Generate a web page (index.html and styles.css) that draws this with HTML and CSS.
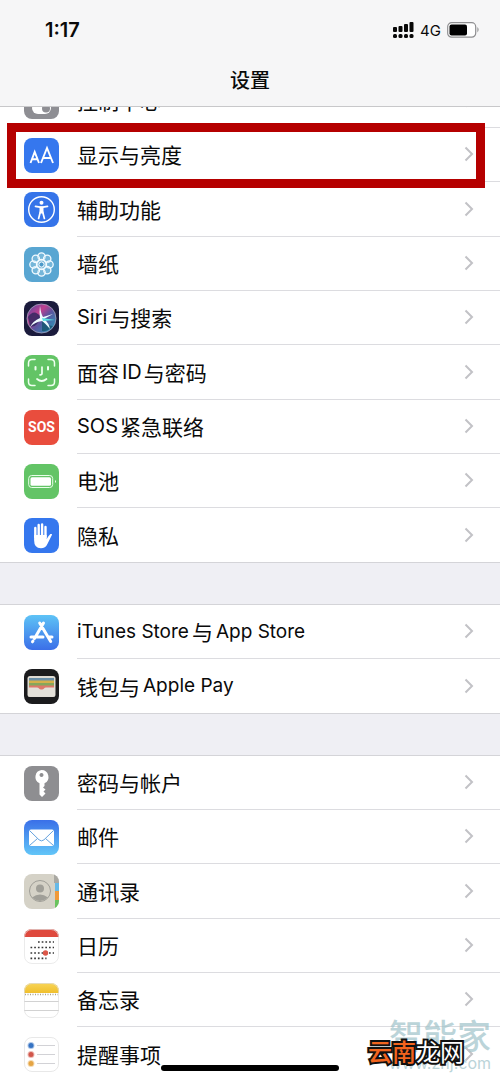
FILE: index.html
```html
<!DOCTYPE html>
<html lang="zh-CN">
<head>
<meta charset="utf-8">
<meta name="viewport" content="width=device-width, initial-scale=1">
<title>设置</title>
<link rel="stylesheet" href="styles.css">
</head>
<body>
<svg class="defs" width="0" height="0" aria-hidden="true">
  <defs>
    <linearGradient id="sky" x2="0" y2="1"><stop stop-color="#5ec3f6"/><stop offset="1" stop-color="#3b6fe8"/></linearGradient>
    <linearGradient id="mail" x2="0" y2="1"><stop stop-color="#3a6fe8"/><stop offset="1" stop-color="#62c6f8"/></linearGradient>
    <linearGradient id="note" x2="0" y2="1"><stop stop-color="#f8d558"/><stop offset="1" stop-color="#f0bf2c"/></linearGradient>
    <linearGradient id="orb" x2="1" y2="1"><stop stop-color="#4a4ca8"/><stop offset=".35" stop-color="#c0408f"/><stop offset=".55" stop-color="#5b549f"/><stop offset="1" stop-color="#20a6c0"/></linearGradient>
    <clipPath id="tile"><rect width="35" height="35" rx="8"/></clipPath>
    <symbol id="chevron" viewBox="0 0 10 16"><path d="M1.5 1.500 8 8l-6.500 6.500" fill="none" stroke="#c2c2c6" stroke-width="2"/></symbol>
  </defs>
</svg>
<div class="screen">
  <header class="top">
    <div class="status">
      <time>1:17</time>
      <div class="signals">
        <svg width="21" height="16" viewBox="0 0 21 16" role="img" aria-label="信号"><g fill="#080808"><rect y="5" width="4" height="5" rx="1"/><rect x="5.500" y="4" width="4" height="6" rx="1"/><rect x="11" y="2" width="4" height="8" rx="1"/><rect x="16.500" width="4" height="10" rx="1"/><rect y="12" width="4" height="4" rx="1.500"/><rect x="5.500" y="12" width="4" height="4" rx="1.500"/><rect x="11" y="12" width="4" height="4" rx="1.500"/><rect x="16.500" y="12" width="4" height="4" rx="1.500"/></g></svg>
        <span>4G</span>
        <svg width="33" height="16" viewBox="0 0 33 16" role="img" aria-label="电池电量"><rect x=".7" y=".7" width="28" height="14.500" rx="4" fill="#fff" stroke="#8e8e90" stroke-width="1.200"/><rect x="2.500" y="2.500" width="17.500" height="11" rx="2"/><path d="M30.500 5q2 2.700 0 5.500z" fill="#777"/></svg>
      </div>
    </div>
    <h1>设置</h1>
  </header>

  <main class="list">
    <nav class="group">
      <a class="row" href="#control"><svg class="icon" viewBox="0 0 35 35"><rect width="35" height="35" rx="8" fill="#8e8e93"/><rect x="8" y="6" width="19" height="10" rx="5" fill="none" stroke="#fff" stroke-width="2"/><rect x="8" y="18" width="19" height="12" rx="6" fill="#fff"/><circle cx="22" cy="24.500" r="4" fill="#8e8e93"/></svg><span class="label">控制中心<svg class="chevron"><use href="#chevron"/></svg></span></a>
      <a class="row marked" href="#display"><svg class="icon" viewBox="0 0 35 35"><rect width="35" height="35" rx="8" fill="#3577ee"/><path d="m6.500 25 4.200-11L15 25M8 21.300h5.500M17 25l6-15 6 15M19 20h8" fill="none" stroke="#fff" stroke-width="1.900"/></svg><span class="label">显示与亮度<svg class="chevron"><use href="#chevron"/></svg></span></a>
      <a class="row" href="#accessibility"><svg class="icon" viewBox="0 0 35 35"><rect width="35" height="35" rx="8" fill="#3574e9"/><circle cx="17.500" cy="17.500" r="12.800" fill="none" stroke="#fff" stroke-width="1.400"/><circle cx="17.500" cy="10.700" r="2" fill="#fff"/><path d="m11.500 14.300 4.500.8h3l4.500-.8M16.300 20l-1.700 6.500M18.700 20l1.700 6.500" fill="none" stroke="#fff" stroke-width="1.700" stroke-linecap="round"/><path d="M15.500 14.500h4v7h-4z" fill="#fff"/></svg><span class="label">辅助功能<svg class="chevron"><use href="#chevron"/></svg></span></a>
      <a class="row" href="#wallpaper"><svg class="icon" viewBox="0 0 35 35"><rect width="35" height="35" rx="8" fill="#59a6d2"/><g fill="#a8d3e9" fill-opacity=".35" stroke="#f2faff" stroke-width="1.300"><circle cx="17.500" cy="9.500" r="3.700"/><circle cx="23.200" cy="11.800" r="3.700"/><circle cx="25.500" cy="17.500" r="3.700"/><circle cx="23.200" cy="23.200" r="3.700"/><circle cx="17.500" cy="25.500" r="3.700"/><circle cx="11.800" cy="23.200" r="3.700"/><circle cx="9.500" cy="17.500" r="3.700"/><circle cx="11.800" cy="11.800" r="3.700"/><circle cx="17.500" cy="17.500" r="5"/></g><circle cx="17.500" cy="17.500" r="2.600" fill="#4c9aca" stroke="#fff"/></svg><span class="label">墙纸<svg class="chevron"><use href="#chevron"/></svg></span></a>
      <a class="row" href="#siri"><svg class="icon" viewBox="0 0 35 35"><rect width="35" height="35" rx="8" fill="#1b1b3c"/><circle cx="17.500" cy="17.500" r="14.500" fill="url(#orb)" stroke="#a6a2bd" stroke-width=".8"/><path d="M4 16q6-9 13 0Q12 28 6 25z" fill="#23245a" opacity=".75"/><path d="M18 18q4 7 11 7-5 6-11 5z" fill="#17546d" opacity=".8"/><path d="M16 5q1 8 3 11l10-3-9 5q5 4 6 10-5-6-8-8-7 1-12 6 3-6 10-9-1-6 0-12z" fill="#effcff"/><path d="m18 17 13 2-12 1z" fill="#58e0e1"/></svg><span class="label"><span class="latin">Siri</span>与搜索<svg class="chevron"><use href="#chevron"/></svg></span></a>
      <a class="row" href="#faceid"><svg class="icon" viewBox="0 0 35 35"><rect width="35" height="35" rx="8" fill="#63c466"/><g fill="none" stroke="#effff0" stroke-width="1.500" stroke-linecap="round"><path d="M4.500 11V8q0-3.500 3.500-3.500h3M24 4.500h3q3.500 0 3.500 3.500v3M30.500 24v3q0 3.500-3.500 3.500h-3M11 30.500H8q-3.500 0-3.500-3.500v-3"/><path d="M11.500 12v2.500M24 12v2.500" stroke-width="2"/><path d="M18 12v6.500q0 1.500-2 1.300M13 24q4.700 4 9.500 0" stroke-width="1.700"/></g></svg><span class="label">面容<span class="latin mid">ID</span>与密码<svg class="chevron"><use href="#chevron"/></svg></span></a>
      <a class="row" href="#sos"><span class="icon sos" aria-hidden="true">SOS</span><span class="label"><span class="latin">SOS</span>紧急联络<svg class="chevron"><use href="#chevron"/></svg></span></a>
      <a class="row" href="#battery"><svg class="icon" viewBox="0 0 35 35"><rect width="35" height="35" rx="8" fill="#63c466"/><rect x="4.700" y="11.500" width="24" height="12" rx="3" fill="none" stroke="#e8ffe9"/><rect x="6.500" y="13.200" width="20.500" height="8.600" rx="1.500" fill="#fff"/><path d="M31 16q2 1.500 0 3z" fill="#fff"/></svg><span class="label">电池<svg class="chevron"><use href="#chevron"/></svg></span></a>
      <a class="row" href="#privacy"><svg class="icon" viewBox="0 0 35 35"><rect width="35" height="35" rx="8" fill="#3577ee"/><g stroke="#fff" stroke-width="2.400" stroke-linecap="round"><path d="M11.300 19V10M14.700 18V7M18.100 18V6.500M21.500 19V9"/></g><path d="M10.100 17h12.600v4q2-3.500 3.700-5 2.200-.5 1.500 1l-4.500 9q-2 4.300-6.500 4.300-6.800 0-6.800-8z" fill="#fff"/></svg><span class="label">隐私<svg class="chevron"><use href="#chevron"/></svg></span></a>
    </nav>

    <nav class="group">
      <a class="row" href="#store"><svg class="icon" viewBox="0 0 35 35"><rect width="35" height="35" rx="8" fill="url(#sky)"/><g stroke="#fff" stroke-width="3" stroke-linecap="round"><path d="m19.500 8-9 15.500M15.700 8l11 18.500M7 22h12M24.500 22H28M9 26l-.5.800"/></g></svg><span class="label"><span class="latin name">iTunes Store</span>与<span class="latin name mid">App Store</span><svg class="chevron"><use href="#chevron"/></svg></span></a>
      <a class="row" href="#wallet"><svg class="icon" viewBox="0 0 35 35"><rect width="35" height="35" rx="8" fill="#1b1b1d"/><rect x="3.500" y="7" width="28" height="21" rx="2.500" fill="#dedbd3"/><path d="M5 9h25v4H5z" fill="#698fa8"/><path d="M5 11.500h25V16H5z" fill="#d4b04a"/><path d="M5 14h25v3H5z" fill="#85a75b"/><path d="M5 16.500h25v4H5z" fill="#dd786a"/><path d="M4 18.500h9q1.300 0 2 1 2.500 3 5 0 .7-1 2-1h9V26q0 1.500-1.500 1.500h-24Q4 27.500 4 26z" fill="#e3e0d9"/></svg><span class="label">钱包与<span class="latin name mid">Apple Pay</span><svg class="chevron"><use href="#chevron"/></svg></span></a>
    </nav>

    <nav class="group">
      <a class="row" href="#passwords"><svg class="icon" viewBox="0 0 35 35"><rect width="35" height="35" rx="8" fill="#8e8e91"/><path fill-rule="evenodd" d="M17.500 4a7 7 0 0 1 3 13.300V20l-1.500 1.500 2.500 2-2 2 2 2-3.500 3.500-2.500-2.500V17.300A7 7 0 0 1 17.500 4zm0 3a2 2 0 1 0 .01 0z" fill="#fff"/></svg><span class="label">密码与帐户<svg class="chevron"><use href="#chevron"/></svg></span></a>
      <a class="row" href="#mail"><svg class="icon" viewBox="0 0 35 35"><rect width="35" height="35" rx="8" fill="url(#mail)"/><rect x="5" y="9.500" width="25" height="16.500" rx="2" fill="#fff"/><path d="m5.500 10.500 9.500 9.300q2.500 2.200 5 0l9.500-9.300M5.500 25.500l8-7M29.500 25.500l-8-7" fill="none" stroke="#65a3df"/></svg><span class="label">邮件<svg class="chevron"><use href="#chevron"/></svg></span></a>
      <a class="row" href="#contacts"><svg class="icon" viewBox="0 0 35 35"><g clip-path="url(#tile)"><path d="M0 0h35v35H0z" fill="#d5d2c7"/><path d="M30 0h5v9h-5z" fill="#a9a8a2"/><path d="M31 9h4v8h-4z" fill="#65b9e7"/><path d="M31 17h4v9h-4z" fill="#f09a3a"/><path d="M31 26h4v9h-4z" fill="#69c35e"/></g><circle cx="16" cy="17" r="10.500" fill="none" stroke="#a09f98"/><circle cx="16" cy="14.500" r="4" fill="#a09f98"/><path d="M8 23.500q8-6 16 0-8 7-16 0z" fill="#a09f98"/></svg><span class="label">通讯录<svg class="chevron"><use href="#chevron"/></svg></span></a>
      <a class="row" href="#calendar"><svg class="icon" viewBox="0 0 35 35"><g clip-path="url(#tile)"><path d="M0 0h35v35H0z" fill="#fff"/><path d="M0 0h35v8H0z" fill="#df493d"/></g><rect x=".5" y=".5" width="34" height="34" rx="7.500" fill="none" stroke="#e3e3e3" stroke-width=".7"/><g stroke="#373737" stroke-width="1.700" stroke-dasharray="1.700 2"><path d="M14 13h16M6.500 18.500H30M6.500 24H30M6.500 29.300h16"/></g><circle cx="21.500" cy="24" r="2.700" fill="#dc5749"/></svg><span class="label">日历<svg class="chevron"><use href="#chevron"/></svg></span></a>
      <a class="row" href="#notes"><svg class="icon" viewBox="0 0 35 35"><g clip-path="url(#tile)"><path d="M0 0h35v35H0z" fill="#fff"/><path d="M0 0h35v10H0z" fill="url(#note)"/></g><path d="M1 11.500h33" stroke="#aaa389" stroke-width="1.600" stroke-dasharray="1 1.500"/><path d="M0 18.500h35M0 27.500h35" stroke="#d2d2d2"/><rect x=".5" y=".5" width="34" height="34" rx="7.500" fill="none" stroke="#dedede" stroke-width=".7"/></svg><span class="label">备忘录<svg class="chevron"><use href="#chevron"/></svg></span></a>
      <a class="row" href="#reminders"><svg class="icon" viewBox="0 0 35 35"><rect x=".5" y=".5" width="34" height="34" rx="7.500" fill="#fff" stroke="#dedede" stroke-width=".7"/><path d="M13 8.500h18M13 17.500h18M13 26.500h18" stroke="#d2d2d6"/><g stroke-opacity=".4" stroke-width="2"><circle cx="7" cy="8.500" r="2.500" fill="#3774c4" stroke="#3774c4"/><circle cx="7" cy="17.500" r="2.500" fill="#d1574c" stroke="#d1574c"/><circle cx="7" cy="26.500" r="2.500" fill="#e5a544" stroke="#e5a544"/></g></svg><span class="label">提醒事项<svg class="chevron"><use href="#chevron"/></svg></span></a>
    </nav>
  </main>
  <div class="home"></div>
  <div class="watermark"><span>智能家</span><small>www.znj.com</small></div>
  <div class="brand"><b>云南</b>龙网</div>
</div>
</body>
</html>
```
FILE: styles.css
```css
* { box-sizing: border-box; }

body {
  margin: 0;
  background: #efeff4;
  color: #0a0a0a;
  font-family: Inter, "Noto Sans CJK SC", sans-serif;
}

.defs { position: absolute; }

.screen {
  position: relative;
  height: 100vh;
  overflow: hidden;
}

.top {
  position: relative;
  z-index: 2;
  height: 107px;
  padding: 18px 20px 0 45px;
  border-bottom: 1px solid #c8c8ca;
  background: #f6f6f7;
}

.status {
  display: flex;
  align-items: center;
  justify-content: space-between;
  height: 24px;
}

.status time {
  font-size: 20px;
  font-weight: 600;
}

.signals {
  display: flex;
  align-items: center;
  gap: 6px;
  font-size: 15px;
}

h1 {
  margin: 25px 25px 0 0;
  font-size: 20px;
  font-weight: 500;
  line-height: 28px;
  text-align: center;
}

/* The first row is scrolled part-way under the header. */
.list { margin-top: -33px; }

.group {
  margin-bottom: 41px;
  border-bottom: 1px solid #d4d4d8;
  background: #fff;
}

.group + .group { border-top: 1px solid #d4d4d8; }

.row {
  position: relative;
  display: flex;
  align-items: center;
  gap: 18px;
  height: 54px;
  padding-left: 24px;
  color: inherit;
  text-decoration: none;
}

.row:nth-child(3n) { height: 55px; }
.row:last-child { height: 54px; }

.icon {
  flex: none;
  width: 35px;
  height: 35px;
}

.sos {
  border-radius: 8px;
  background: #e94d3d;
  color: #fff;
  font: 700 14px/35px Roboto, sans-serif;
  text-align: center;
}

.label {
  display: flex;
  flex: 1;
  align-items: center;
  align-self: stretch;
  padding: 0 26px 1px 0;
  border-bottom: 1px solid #dcdce0;
  font-size: 21px;
  white-space: nowrap;
}

.row:last-child .label { border-bottom: 0; }

.latin {
  margin-right: 2px;
  font-size: 20px;
}

.mid { margin-left: 3px; }

.name { font-size: 19px; }

.row .name { margin-right: 3px; }

.chevron {
  width: 10px;
  height: 16px;
  margin-left: auto;
}

.marked::after {
  content: "";
  position: absolute;
  z-index: 1;
  inset: -5px 15px -6px 7px;
  border: 9px solid #b50000;
}

.home {
  position: absolute;
  bottom: 10px;
  left: 50%;
  width: 178px;
  height: 6px;
  margin-left: -89px;
  border-radius: 3px;
  background: #000;
}

.watermark {
  position: absolute;
  right: 9px;
  bottom: 9px;
  display: flex;
  flex-direction: column;
  align-items: flex-end;
  color: #9fc3c9;
  opacity: .7;
}

.watermark span {
  font-size: 34px;
  font-weight: 500;
  line-height: 34px;
}

.watermark small {
  font-size: 16px;
  line-height: 18px;
}

.brand {
  position: absolute;
  right: 36px;
  bottom: 12px;
  color: #fff;
  font-size: 24px;
  line-height: 32px;
  paint-order: stroke fill;
  -webkit-text-stroke: 4px #111;
}

.brand b {
  color: #f2641e;
  font-weight: 500;
}
```
